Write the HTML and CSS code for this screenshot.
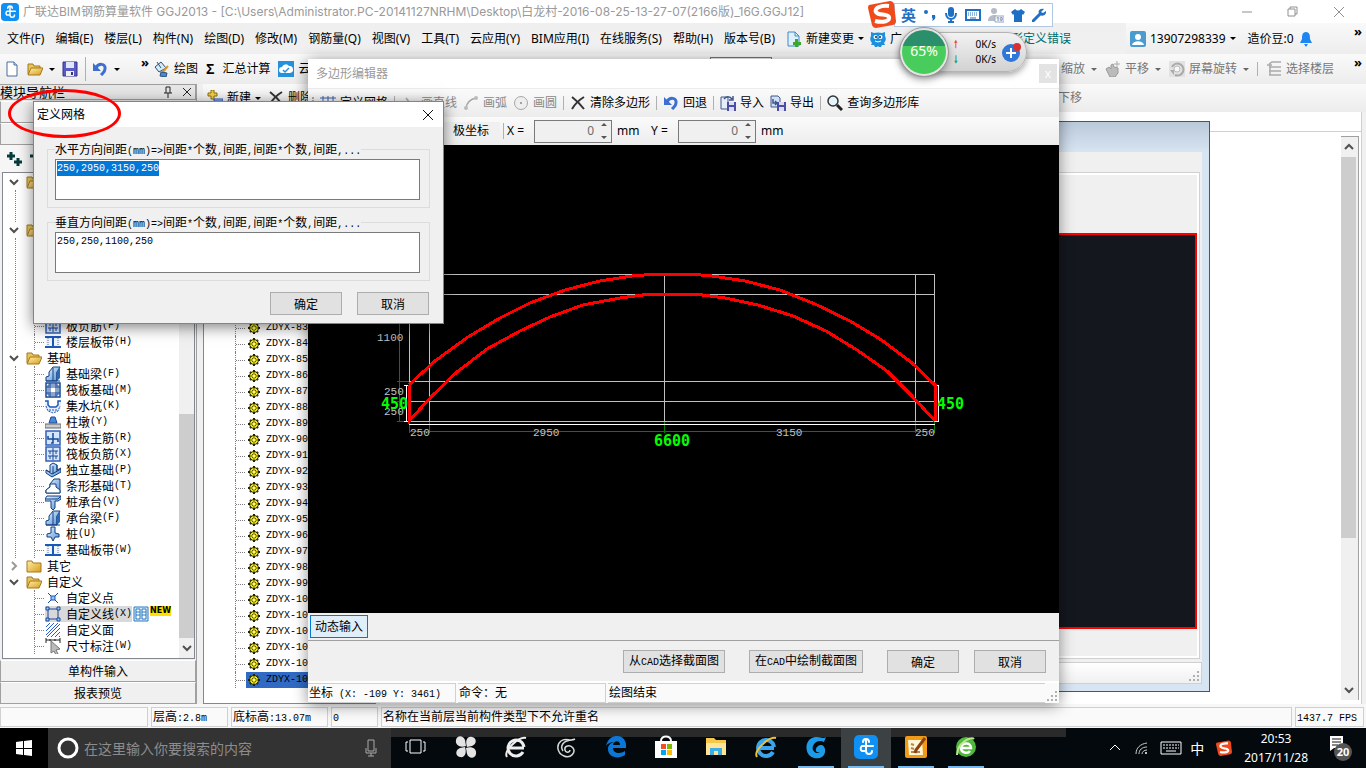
FILE: index.html
```html
<!DOCTYPE html>
<html lang="zh-CN">
<head>
  <meta charset="UTF-8" />
  <meta name="viewport" content="width=device-width, initial-scale=1" />
  <title>广联达BIM钢筋算量软件 GGJ2013</title>
  <link rel="stylesheet" href="styles.css">
</head>
<body>

<!-- shared icons -->
<svg class="defs" width="0" height="0">
  <defs>
    <linearGradient id="gold" x1="0" y1="0" x2="1" y2="1"><stop offset="0" stop-color="#fff0a8"/><stop offset="1" stop-color="#d89c1c"/></linearGradient>
    <linearGradient id="steel" x1="0" y1="0" x2="1" y2="1"><stop offset="0" stop-color="#eaf4ff"/><stop offset="1" stop-color="#4f8fd8"/></linearGradient>
  </defs>
  <symbol id="app" viewBox="0 0 24 24"><rect width="24" height="24" rx="5" fill="#0f90f5"/><path d="M12 5v11a3 3 0 0 0 6 0M12 11H8a3 3 0 0 0 0 5h4M12 11h7M9 7a3 3 0 0 1 6 0" fill="none" stroke="#fff" stroke-width="2" stroke-linecap="round"/></symbol>
  <symbol id="page" viewBox="0 0 16 16"><path d="M3 1h7l3 3v11H3z" fill="#fff" stroke="#4a6d99"/><path d="M10 1v3h3" fill="#cfe0f4" stroke="#4a6d99"/></symbol>
  <symbol id="folder-open" viewBox="0 0 16 16"><path d="M1 3h5l1 2h6v8H1z" fill="#e8c45c" stroke="#a5781c"/><path d="M4 7h12l-3 7H1z" fill="url(#gold)" stroke="#a5781c"/></symbol>
  <symbol id="folder" viewBox="0 0 16 16"><path d="M1 3h5l1 2h8v9H1z" fill="url(#gold)" stroke="#a5781c"/></symbol>
  <symbol id="save" viewBox="0 0 16 16"><path d="M1 1h14v14H1z" fill="#5a5ac4" stroke="#33338a"/><path d="M4 1h8v6H4z" fill="#dfe6fa"/><path d="M4 10h8v5H4z" fill="#eee"/><path d="M9 11h2v3H9z" fill="#33338a"/></symbol>
  <symbol id="undo" viewBox="0 0 16 16"><path d="M4 7C6 2 14 2 13 8c0 3-2 4-4 6" fill="none" stroke="#3c6fd0" stroke-width="3"/><path d="M1 2v8h8z" fill="#3c6fd0"/></symbol>
  <symbol id="paint" viewBox="0 0 16 16"><path d="M1 6l6-5 5 6-7 4z" fill="#dbe9f7" stroke="#28527a"/><path d="M3 1l4 6" stroke="#28527a"/><path d="M14 5l-6 7" stroke="#d79a28" stroke-width="2"/><path d="M7 11l6 1-1 4-6-1z" fill="#4f86d6" stroke="#28527a"/></symbol>
  <symbol id="cloud" viewBox="0 0 16 16"><rect width="16" height="16" fill="#2491dd"/><path d="M4 12a3 3 0 0 1 0-6 4 4 0 0 1 7-1 3.500 3.500 0 0 1 1 7z" fill="#fff"/><path d="M5 9l2 2 4-4" fill="none" stroke="#2491dd" stroke-width="1.500"/></symbol>
  <symbol id="cross" viewBox="0 0 16 16"><path d="M2 2c4 3 8 7 12 12M14 2C9 5 5 9 2 14" fill="none" stroke="#333" stroke-width="2"/></symbol>
  <symbol id="add-row" viewBox="0 0 16 16"><path d="M4 0h3v3h3v3H7v3H4V6H1V3h3z" fill="#f0d040" stroke="#8a6d0c"/><path d="M7 9h9v6H7z" fill="#b8d4f8" stroke="#2858b8"/><path d="M7 11h9" stroke="#2858b8"/></symbol>
  <symbol id="grid" viewBox="0 0 16 16"><path d="M3 1v14M8 1v14M13 1v14M0 3h16M0 8h16M0 13h16" stroke="#3c62ac" stroke-width="1"/></symbol>
  <symbol id="line" viewBox="0 0 16 16"><path d="M5 3l7 9" stroke="#aaa" stroke-width="1.500"/></symbol>
  <symbol id="arc" viewBox="0 0 16 16"><path d="M3 13C4 7 8 4 13 3" fill="none" stroke="#a8a8a8" stroke-width="1.500"/><circle cx="3" cy="13" r="2" fill="#bbb"/><circle cx="13" cy="3" r="2" fill="#bbb"/></symbol>
  <symbol id="circle" viewBox="0 0 16 16"><circle cx="8" cy="8" r="6.500" fill="#eee" stroke="#a8a8a8"/><circle cx="8" cy="8" r="1" fill="#888"/></symbol>
  <symbol id="import" viewBox="0 0 16 16"><path d="M1 2h7v12H1z" fill="#e6eefa" stroke="#41578a"/><path d="M7 7h9v9H7z" fill="#4b4ea8"/><path d="M9 7h5v3H9zM9 12h5v4H9z" fill="#dde"/><path d="M4 4c2-3 6-3 8 0M13 1v4H9" fill="none" stroke="#41578a" stroke-width="1.500"/></symbol>
  <symbol id="export" viewBox="0 0 16 16"><path d="M1 1h7l2 2v9H1z" fill="#cfe0f8" stroke="#41578a"/><path d="M7 7h9v9H7z" fill="#4b4ea8"/><path d="M9 7h5v3H9zM9 12h5v4H9z" fill="#dde"/><path d="M3 4v4h4M5 6l2 2-2 2" fill="none" stroke="#41578a" stroke-width="1.500"/></symbol>
  <symbol id="search" viewBox="0 0 16 16"><circle cx="6" cy="6" r="5" fill="#e4f4fc" stroke="#333" stroke-width="1.500"/><path d="M10 10l5 5" stroke="#222" stroke-width="3"/></symbol>
  <symbol id="doc-plus" viewBox="0 0 16 16"><path d="M2 1h7l4 4v10H2z" fill="#dff0fc" stroke="#3c8cc8"/><path d="M9 1v4h4" fill="none" stroke="#3c8cc8"/><path d="M9 8h3v3h3v3h-3v2H9v-2H7v-3h2z" fill="#3aa828"/></symbol>
  <symbol id="owl" viewBox="0 0 16 16"><path d="M1 1l3 1q4-1 8 0l3-1v4q2 4-1 7l1 2h-3l-1 2H9l-1-1-1 1H5l-1-2H1l1-2q-3-3-1-7z" fill="#1c90e0"/><circle cx="5.500" cy="6" r="2" fill="#fff"/><circle cx="10.500" cy="6" r="2" fill="#fff"/><circle cx="6" cy="6" r="1" fill="#124"/><circle cx="10" cy="6" r="1" fill="#124"/><path d="M5 10q3 2 6 0" stroke="#fff" fill="none"/></symbol>
  <symbol id="user" viewBox="0 0 16 16"><rect width="16" height="16" rx="2" fill="#4a9cd0"/><circle cx="8" cy="6" r="3" fill="#fff"/><path d="M2 14c1-5 11-5 12 0z" fill="#fff"/></symbol>
  <symbol id="bell" viewBox="0 0 16 16"><path d="M8 1c4 0 4 4 4 7l2 4H2l2-4c0-3 0-7 4-7zM6 13h4l-2 3z" fill="#1e86f0"/></symbol>
  <symbol id="hand" viewBox="0 0 16 16"><path d="M1 8l3-2 2 2V4l2-1 1 3 4 1v5l-3 4H5z" fill="#bbb" stroke="#999"/><path d="M12 0v6M9 3h6" stroke="#aaa"/></symbol>
  <symbol id="rotate" viewBox="0 0 16 16"><rect width="16" height="16" fill="#e2e2e2"/><path d="M3 6a6 6 0 1 1 3 8" fill="none" stroke="#aaa" stroke-width="2"/><circle cx="8" cy="8" r="3" fill="#f8f8f8" stroke="#bbb"/><path d="M1 9h4v5z" fill="#aaa"/></symbol>
  <symbol id="layers" viewBox="0 0 16 16"><path d="M3 3l3-2h9M3 6h12M3 10h12M3 14h12M1 4h5M4 4v10" fill="none" stroke="#aaa" stroke-width="1.500"/></symbol>
  <symbol id="gear" viewBox="0 0 12 12"><path d="M6 0v12M0 6h12M2 2l8 8M10 2l-8 8" stroke="#222200" stroke-width="2"/><circle cx="6" cy="6" r="4.500" fill="#f0e818" stroke="#222200"/><path d="M6 2v8M2 6h8M4 4l4 4M8 4l-4 4" stroke="#55550a"/><circle cx="6" cy="6" r="1.500" fill="#ffff60"/></symbol>
  <symbol id="beam" viewBox="0 0 16 16"><path d="M1 15v-4l3-1V6l4-5h7l-3 5v9z" fill="url(#steel)" stroke="#123f80"/><path d="M8 2v13M12 6v9M1 15h14" stroke="#123f80"/><path d="M12 5l3-4v11l-3 3z" fill="#2a6ab0"/></symbol>
  <symbol id="slab" viewBox="0 0 16 16"><path d="M1 1h14v14H1z" fill="#fff" stroke="#174a98" stroke-width="1.500"/><path d="M5 1v14M11 1v14M1 5h14M1 11h14" stroke="#174a98"/><path d="M3 3h10v10H3z" fill="none" stroke="#174a98"/></symbol>
  <symbol id="pit" viewBox="0 0 16 16"><path d="M0 3h3l2 6h6l2-6h3v7l-3 4H3l-3-4z" fill="#e4eefc"/><path d="M0 3h3v4l2 2h6l2-2V3h3" fill="none" stroke="#1c58b8" stroke-width="1.500"/><path d="M1 8l2 5 5 2 5-2 2-5M4 12h8" fill="none" stroke="#1c58b8" stroke-dasharray="2 1"/></symbol>
  <symbol id="pier" viewBox="0 0 16 16"><path d="M6 3h4l2 6H4z" fill="#4a88d8" stroke="#1c4c98"/><path d="M0 10h16v4H0z" fill="#ccc" stroke="#666"/></symbol>
  <symbol id="rebar" viewBox="0 0 16 16"><path d="M1 1h14v14H1z" fill="#d5e5fb" stroke="#3160bb" stroke-width="1.500"/><path d="M3 6v3h10v3M8 3v10H6" fill="none" stroke="#174a98" stroke-width="1.500"/></symbol>
  <symbol id="rebar-neg" viewBox="0 0 16 16"><path d="M1 1h14v14H1z" fill="#d5e5fb" stroke="#3160bb" stroke-width="1.500"/><path d="M3 5h10M3 10h10M5 5v3M11 5v3M8 2v12M5 10v3M11 10v3" fill="none" stroke="#174a98"/></symbol>
  <symbol id="footing" viewBox="0 0 16 16"><path d="M1 8l4 2V3l3-2 4 2v5l4-2v4l-9 5-6-4z" fill="url(#steel)" stroke="#123f80"/><path d="M8 4v8M12 3v6M1 8l6 4 9-5" fill="none" stroke="#123f80"/></symbol>
  <symbol id="strip" viewBox="0 0 16 16"><path d="M1 15v-3l4-3V6l4-5h6v14z" fill="url(#steel)" stroke="#123f80"/><path d="M1 15v-3l4-3V6h6v3l4 3v3z" fill="#fff" stroke="#123f80"/></symbol>
  <symbol id="cap" viewBox="0 0 16 16"><path d="M0 5l2-3h14v3l-3 2h-3v7l-2 2-2-2V7H0z" fill="url(#steel)" stroke="#123f80"/><path d="M0 5h13l3-3" fill="none" stroke="#123f80"/></symbol>
  <symbol id="pile" viewBox="0 0 16 16"><path d="M6 1h4v6l4 1v3h-4l-2 4-2-4H2V8l4-1z" fill="url(#steel)" stroke="#123f80"/></symbol>
  <symbol id="band" viewBox="0 0 16 16"><path d="M1 3h14v10H1z" fill="#edf4fd"/><path d="M0 3h16M0 13h16M8 3v10" stroke="#1c58b8" stroke-width="2"/><path d="M3 4v8M13 4v8" stroke="#678" stroke-dasharray="1 1"/></symbol>
  <symbol id="point" viewBox="0 0 16 16"><path d="M3 3l10 10M13 3L3 13" stroke="#1c4898"/><path d="M6 6h4v4H6z" fill="#8cc4fc" stroke="#1c58b8"/></symbol>
  <symbol id="poly" viewBox="0 0 16 16"><path d="M3 3h10v10H3z" fill="none" stroke="#1c4898"/><path d="M1 1h3v3H1zM12 1h3v3h-3zM1 12h3v3H1zM12 12h3v3h-3z" fill="#9cc8fc" stroke="#1c4898"/></symbol>
  <symbol id="area" viewBox="0 0 16 16"><path d="M1 5l4-4M1 9l8-8M1 13L13 1M2 15L15 2M6 15l9-9M10 15l5-5M14 15l1-1" stroke="#2858e0"/></symbol>
  <symbol id="dim" viewBox="0 0 16 16"><path d="M1 0v5M15 0v5M1 2h14M5 1v2M10 1v2" stroke="#222"/><path d="M6 3l9 8-4 1 2 4-2 1-2-4-3 2z" fill="#bbb" stroke="#777"/></symbol>
  <symbol id="sogou" viewBox="0 0 28 28"><path d="M1 5l21-4q3 0 4 3l2 17q0 3-3 4L8 28q-3 0-4-3L0 8q0-2 1-3z" fill="#f04a1c"/><path d="M21 6C13 5 6 8 8 12s11 1 13 5-6 6-14 4" fill="none" stroke="#fff" stroke-width="4"/></symbol>
  <symbol id="up" viewBox="0 0 10 10"><path d="M1 7l4-4 4 4" fill="none" stroke="#505050" stroke-width="2"/></symbol>
  <symbol id="down" viewBox="0 0 10 10"><path d="M1 3l4 4 4-4" fill="none" stroke="#505050" stroke-width="2"/></symbol>
  <symbol id="right" viewBox="0 0 10 10"><path d="M3 1l4 4-4 4" fill="none" stroke="#999" stroke-width="2"/></symbol>
  <symbol id="grip" viewBox="0 0 12 12"><path d="M8 0h2v2H8zM4 4h2v2H4zM8 4h2v2H8zM0 8h2v2H0zM4 8h2v2H4zM8 8h2v2H8z" fill="#b0b0b0"/></symbol>
</svg>

<div class="app">
  <header class="titlebar">
    <svg class="icon-18"><use href="#app"/></svg>
    <span class="title">广联达BIM钢筋算量软件 GGJ2013 - [C:\Users\Administrator.PC-20141127NRHM\Desktop\白龙村-2016-08-25-13-27-07(2166版)_16G.GGJ12]</span>
    <svg class="winctl" viewBox="0 0 104 12"><path d="M0 6h10M46 3h7v7h-7zM48 3V1h7v7h-2M92 1l10 10M102 1L92 11" fill="none" stroke="#909090"/></svg>
  </header>

  <nav class="menubar">
    <div class="menus">
      <a href="#">文件(F)</a><a href="#">编辑(E)</a><a href="#">楼层(L)</a><a href="#">构件(N)</a><a href="#">绘图(D)</a><a href="#">修改(M)</a><a href="#">钢筋量(Q)</a><a href="#">视图(V)</a><a href="#">工具(T)</a><a href="#">云应用(Y)</a><a href="#">BIM应用(I)</a><a href="#">在线服务(S)</a><a href="#">帮助(H)</a><a href="#">版本号(B)</a>
      <button class="tool"><svg class="icon"><use href="#doc-plus"/></svg>新建变更<i class="caret"></i></button>
      <button class="tool"><svg class="icon"><use href="#owl"/></svg>广</button>
      <a class="tip" href="#">形定义错误</a>
    </div>
    <div class="account">
      <button class="tool"><svg class="icon"><use href="#user"/></svg>13907298339<i class="caret"></i></button>
      <button class="tool">造价豆:0<svg class="icon"><use href="#bell"/></svg></button>
      <b class="more">»</b>
    </div>
  </nav>

  <div class="toolbar">
    <div class="group files">
      <button class="tool" aria-label="新建"><svg class="icon"><use href="#page"/></svg></button>
      <button class="tool" aria-label="打开"><svg class="icon"><use href="#folder-open"/></svg><i class="caret"></i></button>
      <button class="tool" aria-label="保存"><svg class="icon"><use href="#save"/></svg></button>
      <i class="sep"></i>
      <button class="tool" aria-label="撤销"><svg class="icon"><use href="#undo"/></svg><i class="caret"></i></button>
      <b class="more">»</b>
    </div>
    <div class="group">
      <button class="tool"><svg class="icon"><use href="#paint"/></svg>绘图</button>
      <button class="tool"><b class="sigma">Σ</b>汇总计算</button>
      <button class="tool"><svg class="icon"><use href="#cloud"/></svg>云</button>
    </div>
    <select class="floor" aria-label="楼层"></select>
    <div class="group view-tools">
      <button class="tool">缩放<i class="caret"></i></button>
      <button class="tool"><svg class="icon"><use href="#hand"/></svg>平移<i class="caret"></i></button>
      <button class="tool"><svg class="icon"><use href="#rotate"/></svg>屏幕旋转<i class="caret"></i></button>
      <i class="sep"></i>
      <button class="tool"><svg class="icon"><use href="#layers"/></svg>选择楼层</button>
      <b class="more">»</b>
    </div>
  </div>

  <div class="workspace">
    <aside class="sidebar">
      <div class="panel-head"><span>模块导航栏</span>
        <svg width="32" height="12" viewBox="0 0 32 12"><path d="M5 1v6M9 1v6M5 1h4M3 7h8M7 7v5M22 2l8 8M30 2l-8 8" fill="none" stroke="#222"/></svg>
      </div>
      <button class="wide" aria-label="工程设置"></button>
      <button class="wide" aria-label="绘图输入"></button>
      <div class="tree-tools"><svg width="36" height="18" viewBox="0 0 36 18"><path d="M5 1v8M1 5h8M12 7v8M8 11h8M24 5h8" stroke="#073c3c" stroke-width="3"/></svg></div>
      <div class="tree-box">
        <ul class="tree">
          <li><div class="node"><svg class="arrow"><use href="#down"/></svg><svg class="icon"><use href="#folder-open"/></svg></div>
            <ul>
              <li><i class="branch"></i><svg class="icon"><use href="#grid"/></svg></li>
              <li><i class="branch"></i><svg class="icon"><use href="#grid"/></svg></li>
            </ul>
          </li>
          <li><div class="node"><svg class="arrow"><use href="#down"/></svg><svg class="icon"><use href="#folder-open"/></svg></div>
            <ul>
              <li><i class="branch"></i><svg class="icon"><use href="#slab"/></svg></li>
              <li><i class="branch"></i><svg class="icon"><use href="#slab"/></svg></li>
              <li><i class="branch"></i><svg class="icon"><use href="#cap"/></svg></li>
              <li><i class="branch"></i><svg class="icon"><use href="#poly"/></svg></li>
              <li><i class="branch"></i><svg class="icon"><use href="#rebar"/></svg></li>
              <li><i class="branch"></i><svg class="icon"><use href="#rebar-neg"/></svg>板负筋<small>(F)</small></li>
              <li><i class="branch"></i><svg class="icon"><use href="#band"/></svg>楼层板带<small>(H)</small></li>
            </ul>
          </li>
          <li><div class="node"><svg class="arrow"><use href="#down"/></svg><svg class="icon"><use href="#folder-open"/></svg>基础</div>
            <ul>
              <li><i class="branch"></i><svg class="icon"><use href="#beam"/></svg>基础梁<small>(F)</small></li>
              <li><i class="branch"></i><svg class="icon"><use href="#slab"/></svg>筏板基础<small>(M)</small></li>
              <li><i class="branch"></i><svg class="icon"><use href="#pit"/></svg>集水坑<small>(K)</small></li>
              <li><i class="branch"></i><svg class="icon"><use href="#pier"/></svg>柱墩<small>(Y)</small></li>
              <li><i class="branch"></i><svg class="icon"><use href="#rebar"/></svg>筏板主筋<small>(R)</small></li>
              <li><i class="branch"></i><svg class="icon"><use href="#rebar-neg"/></svg>筏板负筋<small>(X)</small></li>
              <li><i class="branch"></i><svg class="icon"><use href="#footing"/></svg>独立基础<small>(P)</small></li>
              <li><i class="branch"></i><svg class="icon"><use href="#strip"/></svg>条形基础<small>(T)</small></li>
              <li><i class="branch"></i><svg class="icon"><use href="#cap"/></svg>桩承台<small>(V)</small></li>
              <li><i class="branch"></i><svg class="icon"><use href="#beam"/></svg>承台梁<small>(F)</small></li>
              <li><i class="branch"></i><svg class="icon"><use href="#pile"/></svg>桩<small>(U)</small></li>
              <li><i class="branch"></i><svg class="icon"><use href="#band"/></svg>基础板带<small>(W)</small></li>
            </ul>
          </li>
          <li><div class="node"><svg class="arrow"><use href="#right"/></svg><svg class="icon"><use href="#folder"/></svg>其它</div></li>
          <li class="last"><div class="node"><svg class="arrow"><use href="#down"/></svg><svg class="icon"><use href="#folder-open"/></svg>自定义</div>
            <ul>
              <li><i class="branch"></i><svg class="icon"><use href="#point"/></svg>自定义点</li>
              <li><i class="branch"></i><span class="current"><svg class="icon"><use href="#poly"/></svg>自定义线<small>(X)</small></span>
                <svg class="book" viewBox="0 0 14 14"><path d="M0 0h14v14H0z" fill="#d5ecfb" stroke="#2878c0"/><path d="M2 2h4v10H2zM8 2h4v10H8zM2 5h4M2 8h4M8 5h4M8 8h4" fill="#fff" stroke="#2878c0"/></svg><b class="new">NEW</b></li>
              <li><i class="branch"></i><svg class="icon"><use href="#area"/></svg>自定义面</li>
              <li><i class="branch"></i><svg class="icon"><use href="#dim"/></svg>尺寸标注<small>(W)</small></li>
            </ul>
          </li>
        </ul>
        <div class="scrollbar tree-scroll"><span class="track"></span><span class="thumb"></span><svg class="arrow"><use href="#down"/></svg></div>
      </div>
      <button class="wide">单构件输入</button>
      <button class="wide">报表预览</button>
    </aside>

    <main class="content">
      <div class="toolbar second">
        <button class="tool"><svg class="icon"><use href="#add-row"/></svg>新建<i class="caret"></i></button>
        <button class="tool"><svg class="icon"><use href="#cross"/></svg>删除</button>
        <button class="tool move">下移</button>
      </div>
      <div class="panes">
        <ul class="members" id="members"></ul>
        <div class="mdi"><div class="mdi-inner">
          <div class="scrollbar"><svg class="arrow"><use href="#up"/></svg><span class="thumb"></span><span class="track"></span><svg class="arrow"><use href="#down"/></svg></div>
        </div></div>
      </div>
    </main>
  </div>

  <footer class="statusbar">
    <span></span>
    <span>层高<small>:2.8m</small></span>
    <span>底标高<small>:13.07m</small></span>
    <span><small>0</small></span>
    <span>名称在当前层当前构件类型下不允许重名</span>
    <span><small>1437.7 FPS</small></span>
  </footer>

  <div class="taskbar">
    <button class="start" aria-label="开始"><svg width="16" height="16" viewBox="0 0 16 16"><path d="M0 2l7-1v7H0zM8 1l8-1v8H8zM0 9h7v6l-7-1zM8 9h8v7l-8-1z" fill="#fff"/></svg></button>
    <label class="search">
      <svg width="22" height="22" viewBox="0 0 22 22"><circle cx="11" cy="11" r="9" fill="none" stroke="#fff" stroke-width="3"/></svg>
      <input type="text" placeholder="在这里输入你要搜索的内容" />
      <svg width="12" height="18" viewBox="0 0 12 18"><path d="M3 1h6v11H3zM1 9v5h10V9M6 14v3M3 17h6" fill="none" stroke="#aaa"/></svg>
    </label>
    <div class="tasks">
      <button aria-label="任务视图"><svg viewBox="0 0 24 24"><path d="M6 5h11v13H6zM4 7H2v9h2M19 7h2v9h-2" fill="none" stroke="#fff"/></svg></button>
      <button aria-label="360"><svg viewBox="0 0 24 24"><path d="M12 11C6 13 1 10 2 5s7-5 9 0zM13 12c-2-6 0-11 5-10s5 7 0 9zM12 13c6-2 11 1 10 6s-7 5-9 0zM11 12c2 6 0 11-5 10s-5-7 0-9z" fill="#e4e4e4"/></svg></button>
      <button aria-label="IE"><svg viewBox="0 0 24 24"><path d="M6 13h14M19 17a8 8 0 1 1 1-5" fill="none" stroke="#eee" stroke-width="3"/><path d="M3 22C-1 16 15 1 22 3" fill="none" stroke="#eee" stroke-width="2"/></svg></button>
      <button aria-label="浏览器"><svg viewBox="0 0 24 24"><path d="M21 4c-5 3-9-2-14 2s-4 12 3 15 12-4 9-8-9-2-8 2 5 2 5 0M19 5C8 5 6 12 9 16" fill="none" stroke="#d8d8d8" stroke-width="1.500"/></svg></button>
      <button aria-label="Edge"><svg viewBox="0 0 24 24"><path d="M2 11C4 3 9 1 13 1c6 0 9 5 9 9v3H9c0 6 8 6 12 3v4c-7 5-17 2-17-6 0-4 3-6 6-7-3 0-6 1-8 4zm7-1h7c0-5-6-5-7 0z" fill="#0a78d8"/></svg></button>
      <button aria-label="应用商店"><svg viewBox="0 0 24 24"><path d="M1 6h22v17H1z" fill="#fff"/><path d="M7 6c0-6 10-6 10 0" fill="none" stroke="#fff" stroke-width="2"/><path d="M7 9h5v5H7z" fill="#f25022"/><path d="M13 9h5v5h-5z" fill="#7fba00"/><path d="M7 15h5v5H7z" fill="#00a4ef"/><path d="M13 15h5v5h-5z" fill="#ffb900"/></svg></button>
      <button aria-label="文件资源管理器"><svg viewBox="0 0 24 24"><path d="M2 3h8l2 2h10v15H2z" fill="#f5c84c"/><path d="M2 8h20v12H2z" fill="#ffe594"/><path d="M6 20v-7h12v7h-4v-4h-4v4z" fill="#3aaee8"/></svg></button>
      <button aria-label="Internet Explorer"><svg viewBox="0 0 24 24"><path d="M6 13h14M19 17a8 8 0 1 1 1-5" fill="none" stroke="#3aa4ec" stroke-width="4"/><path d="M3 22C-1 16 15 1 22 3" fill="none" stroke="#f0c030" stroke-width="2"/></svg></button>
      <button class="running" aria-label="G 浏览器"><svg viewBox="0 0 24 24"><path d="M22 2c-3 3-7-2-14 1S1 17 6 21s14 3 15-4-5-9-8-5 0 6 3 5c-3 3-9-1-7-6s7-6 11-4z" fill="#1c9ce8"/></svg></button>
      <button class="running active" aria-label="GGJ2013"><svg viewBox="0 0 24 24"><use href="#app"/></svg></button>
      <button class="running" aria-label="记事"><svg viewBox="0 0 24 24"><rect x="1" y="1" width="22" height="22" rx="2" fill="#f09a18"/><path d="M4 5h14l1 15H5z" fill="#fff6d8"/><path d="M7 9l3 1M7 13l3 1M7 17h9" stroke="#b08850" stroke-width="2"/><path d="M21 3l-9 12-1 3" fill="none" stroke="#8a4410" stroke-width="3"/></svg></button>
      <button class="running" aria-label="360 浏览器"><svg viewBox="0 0 24 24"><circle cx="12" cy="12" r="10" fill="#50b83a"/><path d="M7 13h10c0-6-9-6-10 0 0 5 7 6 9 3" fill="none" stroke="#fff" stroke-width="2.500"/><path d="M3 20C3 8 17 1 20 4" fill="none" stroke="#b8e890" stroke-width="2"/></svg></button>
    </div>
    <div class="tray">
      <svg width="14" height="14" viewBox="0 0 14 14"><path d="M2 9l5-5 5 5" fill="none" stroke="#fff"/></svg>
      <svg width="14" height="14" viewBox="0 0 14 14"><path d="M2 13C2 7 6 3 13 2M5 13c0-4 3-7 8-7M8 13c0-2 2-4 5-4" fill="none" stroke="#ccc"/><circle cx="12" cy="12" r="1" fill="#fff"/></svg>
      <svg width="22" height="14" viewBox="0 0 22 14"><path d="M1 1h20v12H1zM6 10h10" fill="none" stroke="#fff"/><path d="M3 4h16M3 7h16" stroke="#fff" stroke-dasharray="2 1"/></svg>
      <b>中</b>
      <svg width="16" height="16"><use href="#sogou"/></svg>
      <time><span>20:53</span><span>2017/11/28</span></time>
      <svg width="24" height="26" viewBox="0 0 24 26"><path d="M2 1h13v12H6l-4 3z" fill="#fff"/><path d="M4 4h9M4 7h9M4 10h6" stroke="#111"/><circle cx="15" cy="17" r="9" fill="#555"/><text x="15" y="21" class="badge">20</text></svg>
    </div>
  </div>
</div>

<!-- drawing window behind the editor -->
<section class="win child-win">
  <div class="child-body">
    <div class="child-frame"><div class="child-canvas"></div></div>
    <div class="child-status"><svg width="12" height="12"><use href="#grip"/></svg></div>
  </div>
</section>

<section class="win editor">
  <header class="editor-title">多边形编辑器<button aria-label="关闭">x</button></header>
  <div class="toolbar editor-tools">
    <i class="dots"></i>
    <button class="tool"><svg class="icon"><use href="#grid"/></svg>定义网格</button><i class="sep"></i>
    <button class="tool" disabled><svg class="icon"><use href="#line"/></svg>画直线</button>
    <button class="tool" disabled><svg class="icon"><use href="#arc"/></svg>画弧</button>
    <button class="tool" disabled><svg class="icon"><use href="#circle"/></svg>画圆</button><i class="sep"></i>
    <button class="tool"><svg class="icon"><use href="#cross"/></svg>清除多边形</button><i class="sep"></i>
    <button class="tool"><svg class="icon"><use href="#undo"/></svg>回退</button><i class="sep"></i>
    <button class="tool"><svg class="icon"><use href="#import"/></svg>导入</button>
    <button class="tool"><svg class="icon"><use href="#export"/></svg>导出</button><i class="sep"></i>
    <button class="tool"><svg class="icon"><use href="#search"/></svg>查询多边形库</button>
  </div>
  <div class="coords">
    <button class="polar">极坐标</button><i class="sep"></i>
    <label for="px">X =</label>
    <span class="spin"><input id="px" type="text" value="0" disabled><svg viewBox="0 0 8 18"><path d="M1 4l3-3 3 3zM1 14l3 3 3-3z" fill="#555"/></svg></span><span class="unit">mm</span>
    <label for="py">Y =</label>
    <span class="spin"><input id="py" type="text" value="0" disabled><svg viewBox="0 0 8 18"><path d="M1 4l3-3 3 3zM1 14l3 3 3-3z" fill="#555"/></svg></span><span class="unit">mm</span>
  </div>
  <svg class="drawing" viewBox="308 145 751 468">
    <g class="dim-axis">
      <path d="M399.500 294V421M397 381.500h12M397 421.500h12M397 401.500h4M409 431.500H935M409.500 421v12M429.500 421v12M664.500 421v12M915.500 421v12M934.500 421v12"/>
    </g>
    <g class="grid-lines">
      <path d="M409.500 274v147M429.500 274v147M664.500 274v147M915.500 274v147M934.500 274v147M409 274.500h526M409 294.500h526M409 381.500h526M409 401.500h526M409 421.500h526"/>
    </g>
    <path class="extent" d="M409 424.500h526M404 385.500h5M404 421.500h5M406.500 385v36M935 385.500h4M935 421.500h4M938.500 385v36"/>
    <g class="dim-text">
      <text x="377" y="341">1100</text><text x="384" y="395">250</text><text x="384" y="415">250</text>
      <text x="410" y="436">250</text><text x="533" y="436">2950</text><text x="776" y="436">3150</text><text x="915" y="436">250</text>
    </g>
    <g class="section-shape">
      <polyline points="409,385 435,361 468,337 500,318 530,303 565,290 600,281 632,276 656,274 690,274 712,276 745,281 780,290 815,304 850,321 880,339 911,362 935,385 935,421"/>
      <polyline points="409,385 409,421 432,396 457,372 487,349 520,331 550,317 583,305 620,298 650,294 695,294 725,298 758,305 793,316 826,331 857,350 887,371 912,396 935,421"/>
    </g>
    <g class="total"><text x="381" y="409">450</text><text x="937" y="409">450</text><text x="654" y="446">6600</text></g>
  </svg>
  <div class="dynamic"><button>动态输入</button></div>
  <div class="actions">
    <button class="btn auto">从<small>CAD</small>选择截面图</button>
    <button class="btn auto">在<small>CAD</small>中绘制截面图</button>
    <button class="btn">确定</button>
    <button class="btn">取消</button>
  </div>
  <div class="editor-status">
    <span>坐标<small> (X: -109 Y: 3461)</small></span><span>命令：无</span><span>绘图结束</span>
    <svg width="12" height="12"><use href="#grip"/></svg>
  </div>
</section>

<form class="win dialog" onsubmit="return false">
  <header class="dialog-title">定义网格<button type="button" aria-label="关闭"><svg width="12" height="12" viewBox="0 0 12 12"><path d="M1 1l10 10M11 1L1 11" stroke="#111"/></svg></button></header>
  <div class="dialog-body">
    <fieldset>
      <legend><label for="hgrid">水平方向间距<small>(mm)=&gt;</small>间距<small>*</small>个数<small>,</small>间距<small>,</small>间距<small>*</small>个数<small>,</small>间距<small>,...</small></label></legend>
      <textarea id="hgrid">250,2950,3150,250</textarea>
    </fieldset>
    <fieldset>
      <legend><label for="vgrid">垂直方向间距<small>(mm)=&gt;</small>间距<small>*</small>个数<small>,</small>间距<small>,</small>间距<small>*</small>个数<small>,</small>间距<small>,...</small></label></legend>
      <textarea id="vgrid">250,250,1100,250</textarea>
    </fieldset>
    <div class="dialog-actions"><button class="btn">确定</button><button class="btn" type="button">取消</button></div>
  </div>
</form>

<div class="ime">
  <svg width="28" height="28"><use href="#sogou"/></svg>
  <b>英</b>
  <svg width="14" height="16" viewBox="0 0 14 16"><circle cx="3" cy="5" r="2" fill="#1f6fc4"/><path d="M9 8h3c1 3 0 5-3 6 1-2 1-3 0-3z" fill="#1f6fc4"/></svg>
  <svg width="14" height="16" viewBox="0 0 14 16"><rect x="4" y="0" width="6" height="10" rx="3" fill="#1f6fc4"/><path d="M2 6c0 8 10 8 10 0M7 12v3M4 15h6" fill="none" stroke="#1f6fc4" stroke-width="2"/></svg>
  <svg width="16" height="12" viewBox="0 0 16 12"><path d="M1 1h14v10H1z" fill="#fff" stroke="#1f6fc4" stroke-width="2"/><path d="M3 4h10M3 6h10" stroke="#1f6fc4" stroke-dasharray="1 1"/><path d="M5 9h6" stroke="#1f6fc4"/></svg>
  <svg width="16" height="16" viewBox="0 0 16 16"><circle cx="6" cy="4" r="3" fill="#b4bcc8"/><path d="M0 14c0-8 12-8 12 0z" fill="#b4bcc8"/><path d="M7 9h9v6H7z" fill="#fff" stroke="#a0a8b4"/><text x="8" y="14" class="tiny">19</text></svg>
  <svg width="14" height="14" viewBox="0 0 14 14"><path d="M4 1c2 2 4 2 6 0l4 3-2 3-1-1v8H3V6L2 7 0 4z" fill="#1f6fc4"/></svg>
  <svg width="14" height="14" viewBox="0 0 14 14"><path d="M1 13l7-7" stroke="#1f6fc4" stroke-width="3" stroke-linecap="round"/><path d="M12 1c-5-1-7 3-4 6 3 2 7-1 6-4l-3 2-2-1z" fill="#1f6fc4"/></svg>
</div>

<div class="netball">
  <div class="ball">65%</div>
  <div class="arrows"><b class="red">🠑</b><b class="green">🠓</b></div>
  <div class="speed"><span>0K/s</span><span>0K/s</span></div>
  <svg width="20" height="20" viewBox="0 0 20 20"><circle cx="9" cy="11" r="9" fill="#2f78d8"/><path d="M9 6v10M4 11h10" stroke="#fff" stroke-width="2"/><circle cx="15" cy="5" r="4" fill="#d83030"/></svg>
</div>

<div class="red-ring"></div>

<script>
  const members = document.getElementById('members');
  for (let n = 83; n <= 105; n++) {
    const li = document.createElement('li');
    li.innerHTML = `<i class="branch"></i><span><svg width="12" height="12"><use href="#gear"/></svg>ZDYX-${n}</span>`;
    if (n === 105) li.className = 'selected';
    members.appendChild(li);
  }
  const hgrid = document.getElementById('hgrid');
  hgrid.focus();
  hgrid.select();
</script>
</body>
</html>
```
FILE: styles.css
```css
* { box-sizing: border-box; }
body {
  margin: 0;
  font: 12px/16px "Noto Sans", "Noto Sans CJK SC", sans-serif;
  color: #000;
  background: #f0f0f0;
  overflow: hidden;
  position: relative;
}
a { color: inherit; text-decoration: none; }
button { font: inherit; color: inherit; border: 0; background: none; padding: 0; }
ul { list-style: none; margin: 0; padding: 0; }
svg { flex: none; display: block; }
.defs { position: absolute; }
small { font: 10px/16px "Liberation Mono", monospace; white-space: pre; }
.icon { width: 16px; height: 16px; }
.icon-18 { width: 18px; height: 18px; }
.arrow { width: 10px; height: 10px; }
.app { display: flex; flex-direction: column; height: 100vh; }

/* title + menu */
.titlebar { display: flex; align-items: center; height: 23px; padding: 0 20px 0 1px; background: #fff; gap: 4px; flex: none; }
.title { color: #999; flex: 1; white-space: nowrap; font-family: Inter, "Noto Sans CJK SC", sans-serif; }
.winctl { width: 104px; height: 12px; }
.menubar { display: flex; height: 31px; flex: none; background: #f0f0f0; gap: 3px; }
.menus { display: flex; align-items: center; flex: 1; gap: 11px; padding-left: 7px; white-space: nowrap; background: linear-gradient(#efefef, #f0f0f0); }
.menus .tool:last-of-type { margin-left: -5px; }
.account { display: flex; align-items: center; gap: 12px; width: 240px; padding: 0 4px; background: linear-gradient(#f9f9f9, #ededed); }
.tip { color: #006c6c; margin-left: auto; margin-right: 52px; }
.tool { display: inline-flex; align-items: center; gap: 4px; white-space: nowrap; }
.tool:disabled { color: #888; }
.caret { border: 3px solid transparent; border-top-color: #000; border-bottom: 0; }
.more { font: bold 13px/16px "Noto Sans", sans-serif; margin-left: auto; align-self: flex-start; }
.sep { width: 1px; height: 14px; background: #b0b0b0; }

/* toolbars */
.toolbar { display: flex; align-items: center; height: 30px; flex: none; gap: 5px; background: linear-gradient(#fafafa, #ececec); }
.group { display: flex; align-items: center; gap: 8px; height: 30px; }
.files { width: 149px; padding: 0 0 0 4px; gap: 7px; }
.files .sep { height: 24px; }
.files .caret { margin-left: 2px; }
.files .sep + .tool { margin-left: -1px; }
.sigma { font: bold 14px/16px "Liberation Sans", sans-serif; margin-right: 4px; }
.floor { width: 62px; height: 24px; margin-left: auto; margin-right: 284px; border: 1px solid #7a7a7a; background: #f0f0f0; }
.view-tools { width: 305px; color: #777; gap: 8px; padding-right: 4px; }
.view-tools .caret { border-top-color: #666; margin-left: 2px; }
.view-tools .more { color: #000; }
.second { height: 28px; gap: 7px; padding: 0 284px 0 4px; }
.move { margin-left: auto; color: #777; }

/* workspace */
.workspace { display: flex; flex: 1; min-height: 0; gap: 6px; }
.sidebar { display: flex; flex-direction: column; width: 197px; border-right: 1px solid #a0a0a0; font-family: "Noto Sans CJK SC", sans-serif; }
.panel-head { display: flex; align-items: center; justify-content: space-between; height: 16px; font-size: 13px; border: 1px solid #a0a0a0; border-left: 0; background: #e6e6e6; padding-right: 2px; margin-bottom: 1px; flex: none; }
.wide { height: 22px; border: 1px solid #a0a0a0; border-top-color: #fff; background: #f0f0f0; flex: none; }
.tree-tools { height: 27px; padding: 6px; background: #f6f6f6; flex: none; }
.tree-box { display: flex; flex: 1; min-height: 0; margin: 0 1px 1px 2px; border: 1px solid #828790; background: #fff; }
.tree { flex: 1; padding-top: 1px; white-space: nowrap; }
.tree ul { margin-left: 12px; padding-left: 18px; border-left: 1px dotted #808080; }
.tree .last ul { border-left-color: transparent; }
.node { display: flex; align-items: center; height: 16px; padding-left: 6px; }
.node .icon { margin: 0 5px 0 7px; }
.tree ul li { display: flex; align-items: center; height: 16px; }
.tree ul .icon { margin-right: 5px; }
.branch {
  width: 11px; height: 16px; border-left: 1px dotted #808080;
  background: repeating-linear-gradient(90deg, #808080 0 1px, transparent 1px 2px) 0 8px / 100% 1px no-repeat;
}
.current { display: flex; background: #d9d9d9; height: 16px; }
.book { width: 14px; height: 14px; margin: 0 2px; overflow: visible; }
.new { font: bold 8px/10px "DejaVu Sans", sans-serif; align-self: flex-start; background: #ffe000; }
.scrollbar { display: flex; flex-direction: column; align-items: center; width: 15px; background: #f0f0f0; }
.scrollbar .arrow { margin: 5px 0; }
.scrollbar .thumb { width: 15px; background: #cdcdcd; }
.tree-scroll .track { flex: 243; }
.tree-scroll .thumb { flex: 225; }
.content { display: flex; flex-direction: column; flex: 1; min-width: 0; }
.panes { display: flex; flex: 1; min-height: 0; background: #f0f0f0; gap: 4px; padding-right: 4px; }
.members {
  display: flex; flex-direction: column; justify-content: flex-end;
  width: 173px; padding: 0 0 15px 31px; background: #fff;
  border: 1px solid #828790; border-width: 0 2px 1px 1px;
  font: 10px/16px "Liberation Mono", monospace;
}
.members li { display: flex; height: 16px; flex: none; }
.members li span { display: flex; align-items: center; gap: 6px; padding: 0 3px 0 2px; flex: 1; }
.members .selected span { background: #316ac5; }
.mdi { flex: 1; padding-top: 19px; background: #fff; border-right: 1px solid #d0d0d0; }
.mdi-inner { display: flex; justify-content: flex-end; height: 100%; border-top: 1px solid #d0d0d0; padding: 4px 2px 4px 0; }
.mdi .scrollbar { border-top: 1px solid #a0a0a0; width: 18px; border-right: 1px solid #a0a0a0; padding-right: 2px; }
.mdi .thumb { flex: 383; }
.mdi .track { flex: 143; }

/* status bars */
.statusbar { display: flex; gap: 3px; height: 24px; padding: 3px 2px 1px 0; flex: none; background: #f7f7f7; }
.statusbar span { border: 1px solid #d0d0d0; padding: 1px 1px; white-space: nowrap; background: #fafafa; }
.statusbar > span:nth-child(1) { width: 148px; }
.statusbar > span:nth-child(2) { width: 77px; }
.statusbar > span:nth-child(3) { width: 97px; }
.statusbar > span:nth-child(4) { width: 47px; }
.statusbar > span:nth-child(5) { flex: 1; }
.statusbar > span:nth-child(6) { width: 69px; }

/* taskbar */
.taskbar { display: flex; height: 40px; flex: none; color: #fff; background: #03090c; }
.start { width: 48px; display: flex; align-items: center; justify-content: center; background: #000; }
.search { display: flex; align-items: center; width: 343px; background: #333; padding: 0 14px 0 9px; gap: 5px; }
.search input { flex: 1; min-width: 0; border: 0; outline: 0; padding: 0; background: none; color: #fff; font: 14px/20px "Noto Sans CJK SC", sans-serif; }
.search input::placeholder { color: #8c8c8c; }
.tasks { display: flex; background: linear-gradient(#2a2a2a 0 9px, transparent 9px); padding-right: 75px; }
.tasks button { width: 50px; display: flex; align-items: center; justify-content: center; border: solid transparent; border-width: 0 0 2px; background-clip: padding-box; }
.tasks svg { width: 24px; height: 24px; }
.tasks .running { border-image: linear-gradient(90deg, transparent 0 8px, #76b9ed 8px calc(100% - 8px), transparent calc(100% - 8px)) 2; }
.tasks .active { background: #3c4144; }
.tray { display: flex; align-items: center; margin-left: auto; gap: 12px; padding-right: 14px; }
.tray b { font: 14px/20px "Noto Sans CJK SC", sans-serif; margin-left: -4px; }
.tray time { display: flex; flex-direction: column; align-items: center; line-height: 19px; margin-right: 8px; }
.badge { font: bold 11px "Noto Sans", sans-serif; fill: #fff; text-anchor: middle; }

/* floating windows */
.win { position: absolute; display: flex; flex-direction: column; }
.child-win { left: 700px; top: 121px; width: 510px; height: 571px; padding: 30px 7px 7px; border: 1px solid #50545c; background: linear-gradient(#bac9da, #d7e4f2 30px); }
.child-body { display: flex; flex-direction: column; flex: 1; background: #f0f0f0; padding-top: 20px; }
.child-frame { flex: 1; margin-right: 2px; padding: 60px 2px 29px 0; border: 1px solid #d0d0d0; box-shadow: inset 0 0 0 2px #fff; }
.child-canvas { height: 100%; border: 2px solid #f00; background: #14171e; }
.child-status { display: flex; justify-content: flex-end; align-items: flex-end; height: 22px; margin-top: 3px; border: 1px solid #d0d0d0; background: linear-gradient(#fff, #f0f0f0); }
.editor { left: 308px; top: 59px; width: 751px; background: #f0f0f0; box-shadow: 0 2px 14px rgba(0, 0, 0, .45); }
.editor-title { display: flex; align-items: center; justify-content: space-between; height: 30px; padding: 0 2px 0 8px; background: #fff; color: #999; border-bottom: 1px solid #ececec; }
.editor-title button { width: 18px; height: 19px; background: #e3e3e3; color: #fff; }
.editor-tools { height: 28px; gap: 6px; padding-left: 4px; }
.dots { width: 2px; height: 12px; border-left: 2px dotted #aaa; }
.coords { display: flex; align-items: center; height: 28px; padding-left: 136px; background: linear-gradient(#fafafa, #ececec); }
.polar { width: 56px; height: 18px; padding-left: 9px; text-align: left; background: #f0f0f0; }
.coords .sep { height: 16px; margin: 0 3px; }
.coords label { width: 27px; }
.spin { display: flex; align-items: center; width: 78px; height: 23px; border: 1px solid #7a7a7a; padding-right: 3px; background: #f0f0f0; }
.spin input { flex: 1; min-width: 0; border: 0; padding: 0 6px; background: none; text-align: right; font: inherit; color: #6d6d6d; }
.spin svg { width: 8px; height: 18px; }
.unit { width: 39px; padding-left: 5px; }
.drawing { width: 100%; background: #000; }
.drawing path, .drawing polyline { fill: none; shape-rendering: crispEdges; }
.dim-axis { stroke: #008000; }
.grid-lines { stroke: #c0c0c0; }
.extent { stroke: #fff; }
.section-shape { stroke: #f00; stroke-width: 3; }
.dim-text { fill: #c0c0c0; font: 11px "Liberation Mono", monospace; }
.total { fill: #0f0; font: bold 15px "DejaVu Sans Mono", monospace; }
.dynamic { height: 28px; padding: 2px; border-bottom: 1px solid #a0a0a0; }
.dynamic button { width: 58px; height: 23px; border: 1px solid #0078d7; background: #e0eef9; display: block; }
.actions { display: flex; justify-content: flex-end; gap: 15px; padding: 9px 13px 8px; }
.btn { width: 72px; height: 23px; border: 1px solid #adadad; background: #e1e1e1; font-family: "Noto Sans CJK SC", sans-serif; }
.auto { width: auto; padding: 0 5px; margin-right: 9px; }
.editor-status { display: flex; align-items: flex-end; height: 22px; gap: 2px; border-top: 2px solid #fff; background: #fafafa; }
.editor-status span { width: 148px; height: 20px; padding: 1px; border: 1px solid #d0d0d0; border-left: 0; }
.editor-status span:nth-child(3) { flex: 1; border-right: 0; }

.dialog { left: 33px; top: 101px; width: 411px; border: 1px solid #4393e0; background: #f0f0f0; box-shadow: 0 3px 14px rgba(0, 0, 0, .5); }
.dialog-title { display: flex; align-items: center; justify-content: space-between; height: 25px; padding: 0 9px 0 3px; background: #fff; }
.dialog-body { padding: 14px 13px 8px; }
fieldset { margin: 0 0 6px; padding: 0 9px 7px 7px; border: 1px solid #dcdcdc; min-width: 0; }
legend { padding: 0; height: 16px; white-space: nowrap; font-family: "Noto Sans CJK SC", sans-serif; }
textarea { display: block; width: 100%; height: 41px; margin-top: 2px; resize: none; outline: 0; border: 1px solid #7a7a7a; padding: 1px 1px; font: 10px/15px "Liberation Mono", monospace; background: #fff; color: #000; }
textarea::selection { background: #0078d7; color: #fff; }
.dialog-actions { display: flex; justify-content: flex-end; gap: 15px; padding: 5px 1px 0; }

/* input method bar and net speed ball */
.ime { position: absolute; left: 868px; top: 0; width: 185px; height: 28px; display: flex; align-items: center; gap: 7px; background: linear-gradient(#fff, #fff) 24px 4px / 160px 22px no-repeat; color: #1f6fc4; padding-top: 2px; }
.ime::after { content: ""; position: absolute; inset: 3px 0 1px 26px; border: 1px solid #b0c8e0; }
.ime b { font: bold 15px/20px "Noto Sans CJK SC", sans-serif; margin-left: 5px; }
.ime > svg:first-child { margin-top: -2px; margin-right: -7px; position: relative; z-index: 1; }
.tiny { font: bold 6px "Noto Sans", sans-serif; fill: #889; }
.netball { position: absolute; left: 900px; top: 32px; width: 127px; height: 40px; display: flex; align-items: center; border: 1px solid #b4b4b4; border-radius: 20px; background: linear-gradient(#f2f2f2, #d2d2d2); box-shadow: 0 3px 6px rgba(0, 0, 0, .35); }
.ball { width: 48px; height: 48px; margin: 0 6px 0 -1px; border: 2px solid #e4e4e4; outline: 1px solid #999; border-radius: 50%; color: #fff; font: 14px/42px "Noto Sans", sans-serif; text-align: center; background: linear-gradient(#2c8f6c 0 16px, #48cc5c 16px); box-shadow: 0 3px 8px rgba(0, 0, 0, .4); flex: none; }
.arrows, .speed { display: flex; flex-direction: column; font-size: 10px; line-height: 15px; }
.speed { margin: 0 6px 0 auto; }
.netball svg { margin-right: 4px; }
.red { color: #e85030; }
.green { color: #20a060; }
.red-ring { position: absolute; left: 8px; top: 89px; width: 113px; height: 49px; border: 3px solid #f00; border-radius: 50%; pointer-events: none; }
```
